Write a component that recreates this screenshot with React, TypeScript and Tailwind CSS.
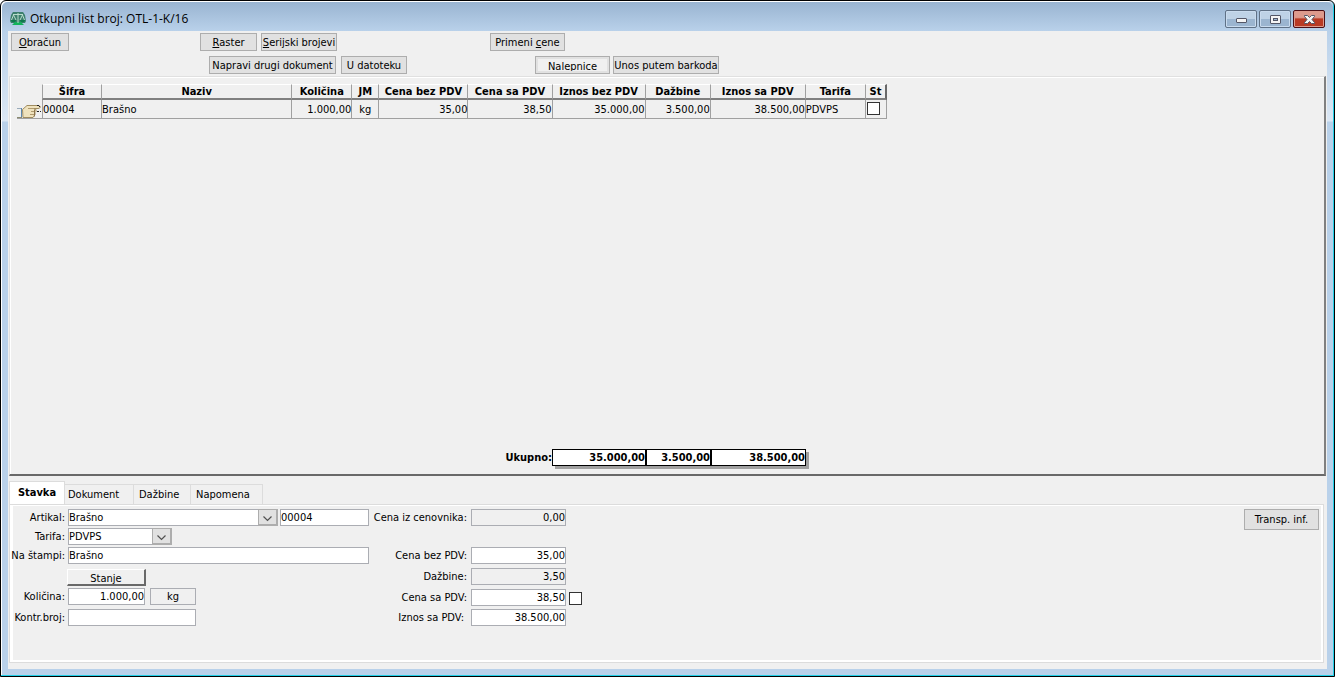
import React, { useState } from "react";

type ToolButtonProps = {
  children: React.ReactNode;
  className?: string;
};

const ToolButton = ({ children, className = "" }: ToolButtonProps) => (
  <button
    type="button"
    className={`flex h-[18px] shrink-0 items-center justify-center border border-[#adadad] bg-[#e1e1e1] whitespace-nowrap hover:border-[#0078d7] active:bg-[#cce4f7] ${className}`}
  >
    {children}
  </button>
);

const ScalesIcon = () => (
  <svg viewBox="0 0 16 14" className="h-[14px] w-4" aria-hidden="true">
    <path d="M3 0h10l2 3 1 6-1 2H1L0 9l1-6z" fill="#3c7f6c" />
    <path d="M5 10h6l3 3H2z" fill="#12b25a" />
    <path
      d="M8 1v10M3 2.500h10M3.500 3L1.500 8M3.500 3L6 8M12.500 3L10 8M12.500 3l2 5"
      stroke="#b9dccb"
      fill="none"
    />
    <path d="M1 8h5c0 3-5 3-5 0zM10 8h5c0 3-5 3-5 0z" fill="#0d7a4c" />
  </svg>
);

const HandIcon = () => (
  <svg viewBox="0 0 25 18" className="block h-[18px] w-[25px]" aria-hidden="true">
    <path d="M0 9h5v8H0z" fill="#eef0f0" />
    <path d="M0 8.500h5" stroke="#9aabba" />
    <path d="M0 17.500h5" stroke="#8a8a70" />
    <path d="M4.500 8v9" stroke="#5f87ad" />
    <path
      d="M5.500 9.500L10 5.500h11c3 0 3 3 0 3h-4l2 1v2l-1 1v2l-2 3h-10z"
      fill="#efe2bd"
      stroke="#a08c60"
    />
    <path d="M11 8.500h6M14 11.500h4M13 14.500h4" stroke="#b09a6e" />
    <path d="M17.500 9.500v7" stroke="#8c744c" />
    <path d="M20 5h2v1h-2zM22 6h1v1h-1zM20 11h2v1h-2zM23 11h1v1h-1z" fill="#222" />
  </svg>
);

const Chevron = () => (
  <span className="pointer-events-none absolute inset-y-0 right-0 flex w-5 items-end justify-center border-t border-r-2 border-b-2 border-l border-[#adadad] bg-[#e1e1e1] pb-[2px]">
    <svg viewBox="0 0 9 6" className="h-[6px] w-[9px]" aria-hidden="true">
      <path d="M.5.500l4 4 4-4" fill="none" stroke="#505050" strokeWidth="1.200" />
    </svg>
  </span>
);

const WindowButtons = () => (
  <div className="flex gap-[2px]">
    <button
      type="button"
      aria-label="Minimize"
      className="flex h-[18px] w-8 items-center justify-center rounded-[2px] border border-[#5f7186] bg-linear-to-b from-[#bed2e6] from-50% to-[#9bb5d0] to-50% shadow-[inset_0_0_0_1px_#c9dbee]"
    >
      <span className="mt-[3px] h-[5px] w-[11px] rounded-[1px] border border-[#535666] bg-[#f4f4f4]" />
    </button>
    <button
      type="button"
      aria-label="Maximize"
      className="flex h-[18px] w-8 items-center justify-center rounded-[2px] border border-[#5f7186] bg-linear-to-b from-[#bed2e6] from-50% to-[#9bb5d0] to-50% shadow-[inset_0_0_0_1px_#c9dbee]"
    >
      <span className="flex h-[9px] w-[11px] items-center justify-center rounded-[1px] border border-[#535666] bg-[#f4f4f4]">
        <span className="h-[3px] w-[5px] border border-[#535666] bg-[#9bb5d0]" />
      </span>
    </button>
    <button
      type="button"
      aria-label="Close"
      className="flex h-[18px] w-8 items-center justify-center rounded-[2px] border border-[#4b0f16] bg-linear-to-b from-[#dd9a8d] from-40% to-[#b93a24] to-50% shadow-[inset_0_0_0_1px_#dd9a8d]"
    >
      <svg viewBox="0 0 11 9" className="h-[9px] w-[11px]" aria-hidden="true">
        <path
          d="M.5.500h3l2 2 2-2h3v1l-2.500 3 2.500 3v1h-3l-2-2-2 2h-3v-1l2.500-3-2.500-3z"
          fill="#f4f4f4"
          stroke="#535666"
        />
      </svg>
    </button>
  </div>
);

const columns = [
  { title: "Šifra", width: "w-[59px]" },
  { title: "Naziv", width: "w-[190px]" },
  { title: "Količina", width: "w-[60px]", align: "text-right" },
  { title: "JM", width: "w-[27px]", align: "text-center" },
  { title: "Cena bez PDV", width: "w-[89px]", align: "text-right" },
  { title: "Cena sa PDV", width: "w-[84px]", align: "text-right" },
  { title: "Iznos bez PDV", width: "w-[93px]", align: "text-right" },
  { title: "Dažbine", width: "w-[65px]", align: "text-right" },
  { title: "Iznos sa PDV", width: "w-[95px]", align: "text-right" },
  { title: "Tarifa", width: "w-[60px]" },
];

const rows = [
  ["00004", "Brašno", "1.000,00", "kg", "35,00", "38,50", "35.000,00", "3.500,00", "38.500,00", "PDVPS"],
];

const ItemsTable = () => (
  <table className="w-[870px] table-fixed border-separate border-spacing-0">
    <thead>
      <tr className="h-4">
        <td className="w-[25px] p-0" />
        {columns.map((col) => (
          <th
            key={col.title}
            className={`border-t border-b-2 border-l border-t-white border-b-[#808080] border-l-[#a0a0a0] p-0 leading-[13px] font-bold whitespace-nowrap ${col.width}`}
          >
            {col.title}
          </th>
        ))}
        <th className="w-[22px] border-t border-r-2 border-b-2 border-l border-t-white border-r-[#696969] border-b-[#808080] border-l-[#a0a0a0] p-0 leading-[13px] font-bold">
          St
        </th>
      </tr>
    </thead>
    <tbody>
      {rows.map((row) => (
        <tr key={row[0]} className="h-[19px]">
          <td className="border-b border-[#a0a0a0] p-0">
            <HandIcon />
          </td>
          {row.map((value, i) => (
            <td
              key={columns[i].title}
              className={`border-b border-l border-[#a0a0a0] p-0 pt-px leading-[17px] whitespace-nowrap ${columns[i].align ?? ""}`}
            >
              {value}
            </td>
          ))}
          <td className="border-r border-b border-l border-[#a0a0a0] p-0 align-top">
            <input
              type="checkbox"
              aria-label="St"
              className="mt-[2px] ml-px block h-[13px] w-[13px] appearance-none border border-[#333] bg-white checked:bg-[#333]"
            />
          </td>
        </tr>
      ))}
    </tbody>
  </table>
);

type FieldProps = {
  id: string;
  value: string;
  className?: string;
  readOnly?: boolean;
};

const Field = ({ id, value, className = "", readOnly = false }: FieldProps) => (
  <input
    id={id}
    type="text"
    defaultValue={value}
    readOnly={readOnly}
    className={`h-[17px] border border-[#abadb3] leading-[15px] outline-none focus:border-[#0078d7] ${readOnly ? "bg-[#f0f0f0]" : "bg-white"} ${className}`}
  />
);

const tabs = [
  { name: "Dokument", width: "w-[69px] pl-[3px]" },
  { name: "Dažbine", width: "w-[57px] pl-[5px]" },
  { name: "Napomena", width: "w-[72px] pl-[5px]" },
];

const StavkaForm = () => (
  <div className="flex items-start">
    <div className="w-[356px]">
      <div className="flex h-[19px] items-start">
        <label htmlFor="artikal" className="mr-[3px] w-[52px] text-right whitespace-nowrap">
          Artikal:
        </label>
        <div className="relative mr-[2px] w-[210px]">
          <select
            id="artikal"
            className="block h-[17px] w-full appearance-none border border-[#abadb3] bg-white leading-[15px] outline-none"
          >
            <option>Brašno</option>
          </select>
          <Chevron />
        </div>
        <input
          type="text"
          aria-label="Šifra artikla"
          defaultValue="00004"
          className="h-[17px] w-[89px] border border-[#abadb3] bg-white leading-[15px] outline-none"
        />
      </div>
      <div className="flex h-[19px] items-start">
        <label htmlFor="tarifa" className="mr-[3px] w-[52px] text-right whitespace-nowrap">
          Tarifa:
        </label>
        <div className="relative w-[104px]">
          <select
            id="tarifa"
            className="block h-[17px] w-full appearance-none border border-[#abadb3] bg-white leading-[15px] outline-none"
          >
            <option>PDVPS</option>
          </select>
          <Chevron />
        </div>
      </div>
      <div className="flex h-[22px] items-start">
        <label htmlFor="stampa" className="mr-[3px] flex w-[52px] justify-end whitespace-nowrap">
          Na štampi:
        </label>
        <Field id="stampa" value="Brašno" className="w-[301px]" />
      </div>
      <button
        type="button"
        className="mb-[2px] ml-[54px] flex h-[17px] w-[79px] items-center justify-center border-t border-r-2 border-b-2 border-l border-t-white border-r-[#696969] border-b-[#696969] border-l-white bg-[#f0f0f0] pt-[2px]"
      >
        Stanje
      </button>
      <div className="flex h-[21px] items-start">
        <label htmlFor="kolicina" className="mr-[3px] w-[52px] text-right whitespace-nowrap">
          Količina:
        </label>
        <Field id="kolicina" value="1.000,00" className="mr-[5px] w-[77px] text-right" />
        <input
          type="text"
          aria-label="Jedinica mere"
          readOnly
          value="kg"
          className="h-[17px] w-[46px] border border-[#abadb3] bg-[#f0f0f0] text-center leading-[15px] outline-none"
        />
      </div>
      <div className="flex h-[19px] items-start">
        <label htmlFor="kontr" className="mr-[3px] flex w-[52px] justify-end whitespace-nowrap">
          Kontr.broj:
        </label>
        <Field id="kontr" value="" className="w-32" />
      </div>
    </div>

    <div className="w-[220px]">
      <div className="flex h-[38px] items-start">
        <label htmlFor="cenovnik" className="mr-1 w-[98px] text-right whitespace-nowrap">
          Cena iz cenovnika:
        </label>
        <Field id="cenovnik" value="0,00" readOnly className="w-[95px] text-right" />
      </div>
      <div className="flex h-[21px] items-start">
        <label htmlFor="cenaBez" className="mr-1 w-[98px] text-right whitespace-nowrap">
          Cena bez PDV:
        </label>
        <Field id="cenaBez" value="35,00" className="w-[95px] text-right" />
      </div>
      <div className="flex h-[21px] items-start">
        <label htmlFor="dazbine" className="mr-1 w-[98px] text-right whitespace-nowrap">
          Dažbine:
        </label>
        <Field id="dazbine" value="3,50" readOnly className="w-[95px] text-right" />
      </div>
      <div className="flex h-5 items-start">
        <label htmlFor="cenaSa" className="mr-1 w-[98px] text-right whitespace-nowrap">
          Cena sa PDV:
        </label>
        <Field id="cenaSa" value="38,50" className="w-[95px] text-right" />
        <input
          type="checkbox"
          aria-label="Zaključaj cenu sa PDV"
          className="mt-[3px] ml-[3px] h-[13px] w-[13px] appearance-none border border-[#333] bg-white checked:bg-[#333]"
        />
      </div>
      <div className="flex h-[19px] items-start">
        <label htmlFor="iznosSa" className="mr-1 w-[98px] pr-[3px] text-right whitespace-nowrap">
          Iznos sa PDV:
        </label>
        <Field id="iznosSa" value="38.500,00" className="w-[95px] text-right" />
      </div>
    </div>

    <ToolButton className="mr-[2px] ml-auto h-[21px] w-[75px]">Transp. inf.</ToolButton>
  </div>
);

const App: React.FC = (): React.JSX.Element => {
  const [activeTab, setActiveTab] = useState("Stavka");

  return (
    <div className="flex min-h-screen flex-col rounded-t-md border border-black bg-[linear-gradient(to_bottom,#b9d1ea_30px,#dbe7f4_120px,#b9d1ea_121px)] font-['DejaVu_Sans_Condensed','DejaVu_Sans',sans-serif] text-[11px] leading-[17px] text-black shadow-[inset_-1px_-1px_0_#22d0e8,inset_1px_1px_0_#fff]">
      <header className="mx-px mt-px flex h-[29px] items-start justify-between rounded-t-md bg-linear-to-b from-[#99b4d1] to-[#b9d1ea] pt-2 pr-[8px] pl-2">
        <div className="flex items-center gap-1">
          <ScalesIcon />
          <h1 className="font-['Open_Sans',sans-serif] text-[12px] leading-[18px]">
            Otkupni list broj: OTL-1-K/16
          </h1>
        </div>
        <WindowButtons />
      </header>

      <main className="mx-[7px] mb-[7px] flex flex-1 flex-col bg-[#f0f0f0] pb-[6px]">
        <div className="flex h-[25px] items-start pt-[2px] pl-[3px]">
          <ToolButton className="w-[58px]">
            <u>O</u>bračun
          </ToolButton>
          <ToolButton className="ml-[131px] w-[57px]">
            <u>R</u>aster
          </ToolButton>
          <ToolButton className="ml-1 w-[76px]">
            <u>S</u>erijski brojevi
          </ToolButton>
          <ToolButton className="ml-[153px] w-[75px]">
            Primeni&nbsp;<u>c</u>ene
          </ToolButton>
        </div>
        <div className="flex h-5 items-start pl-[201px]">
          <ToolButton className="w-[127px]">Napravi drugi dokument</ToolButton>
          <ToolButton className="ml-[5px] w-[66px]">U datoteku</ToolButton>
          <ToolButton className="ml-32 w-[75px]">
            <span className="block h-3 w-[69px] overflow-hidden bg-[#f0f0f0] leading-[15px]">
              Nalepnice
            </span>
          </ToolButton>
          <ToolButton className="ml-[3px] w-[106px]">Unos putem barkoda</ToolButton>
        </div>

        <section className="mr-px ml-px flex flex-1 flex-col border-t border-r-2 border-b-2 border-l border-t-[#e0e0e0] border-r-[#808080] border-b-[#696969] border-l-[#e0e0e0] shadow-[inset_1px_1px_0_#fff]">
          <div className="pt-[7px] pl-[7px]">
            <ItemsTable />
          </div>
          <div className="mt-auto mb-2 flex h-[17px] items-center pl-[495px] font-bold">
            <span className="w-[47px] text-right whitespace-nowrap">Ukupno:</span>
            <div className="flex h-[17px] border border-black bg-white text-right leading-[15px] shadow-[3px_3px_0_#a0a0a0]">
              <span className="w-[92px]">35.000,00</span>
              <span className="w-[65px] border-l-2 border-black">3.500,00</span>
              <span className="w-[95px] border-l-2 border-black">38.500,00</span>
            </div>
          </div>
        </section>

        <div role="tablist" className="mt-[5px] ml-px flex h-[23px] items-end">
          <button
            type="button"
            role="tab"
            aria-selected={activeTab === "Stavka"}
            onClick={() => setActiveTab("Stavka")}
            className="h-[23px] w-[56px] border-t border-r border-l border-[#dcdcdc] bg-white pb-[2px] font-bold"
          >
            Stavka
          </button>
          {tabs.map((tab) => (
            <button
              key={tab.name}
              type="button"
              role="tab"
              aria-selected={activeTab === tab.name}
              onClick={() => setActiveTab(tab.name)}
              className={`h-5 border-t border-r border-[#dcdcdc] text-left ${tab.width}`}
            >
              {tab.name}
            </button>
          ))}
        </div>
        <section
          role="tabpanel"
          className="mr-[3px] ml-px h-[159px] border border-[#dcdcdc] bg-white pt-px pr-[2px] pb-[2px] pl-[3px]"
        >
          <div className="h-full bg-[#f0f0f0] pt-[3px]">
            <StavkaForm />
          </div>
        </section>
      </main>
    </div>
  );
};

export default App;
